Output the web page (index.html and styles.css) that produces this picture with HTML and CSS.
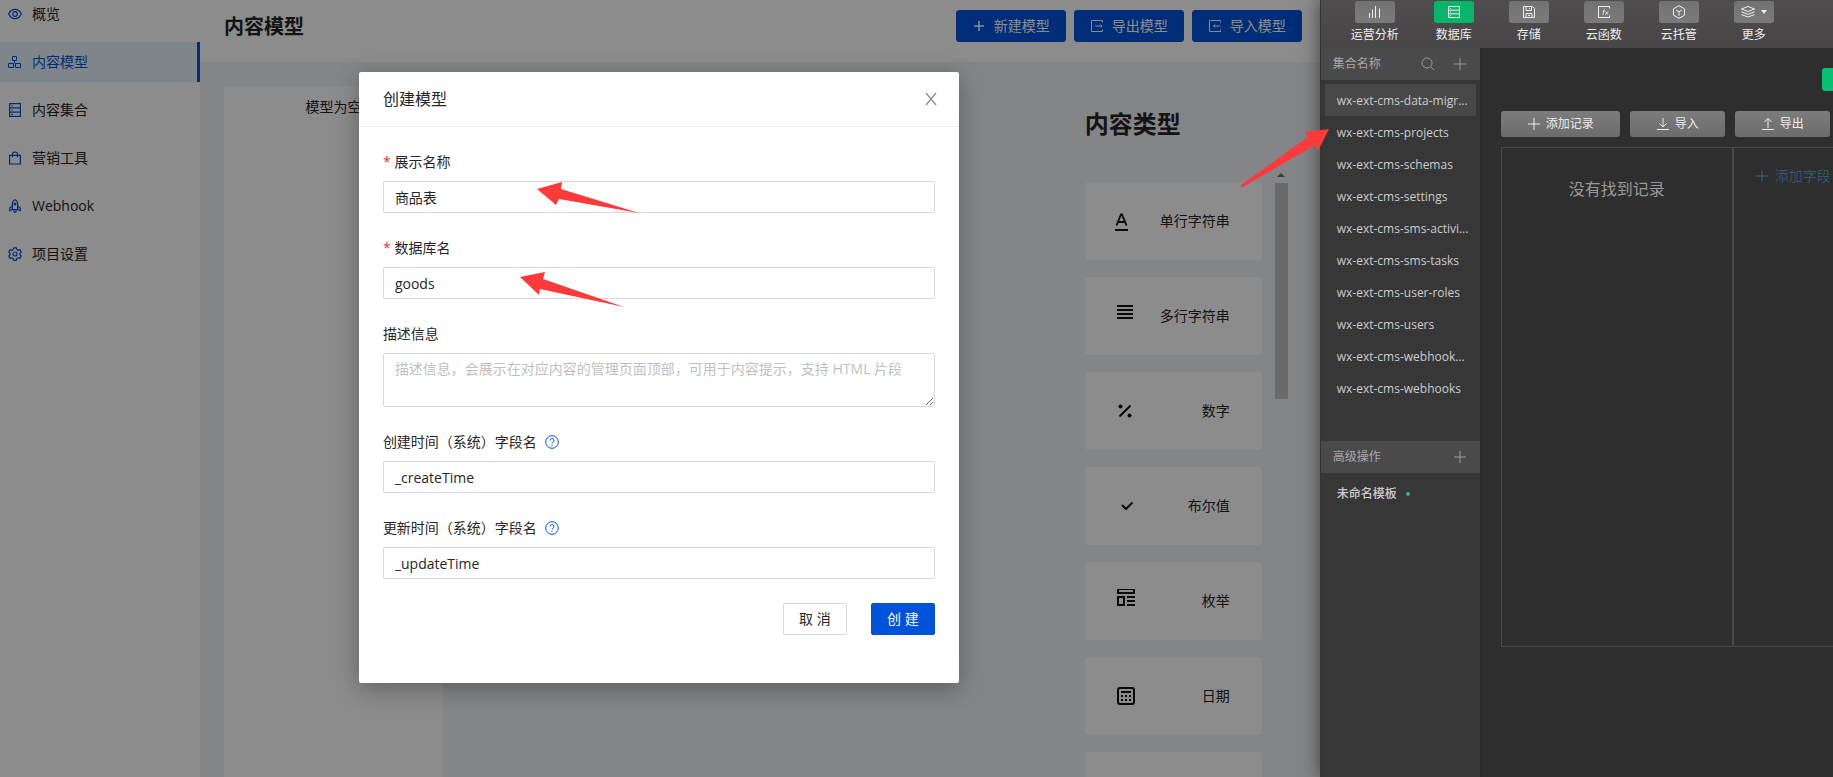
FILE: index.html
```html
<!DOCTYPE html>
<html lang="zh-CN">
<head>
<meta charset="utf-8">
<title>内容模型</title>
<link rel="stylesheet" href="styles.css">
</head>
<body>
<div class="desktop">
  <div class="cms">
    <nav class="menu">
      <a class="menu-item" href="#"><svg class="menu-icon" viewBox="0 0 14 14"><path d="M.6 7C2 4.200 4.300 2.400 7 2.400S12 4.200 13.400 7C12 9.800 9.700 11.600 7 11.600S2 9.800.6 7z"/><circle cx="7" cy="7" r="2.300"/></svg>概览</a>
      <a class="menu-item active" href="#"><svg class="menu-icon" viewBox="0 0 14 14"><path d="M4.500 1.500h4v4h-4zM.5 8.500h5v4h-5zM7.500 8.500h5v4h-5zM6.500 5.500v3" stroke-width="1"/></svg>内容模型</a>
      <a class="menu-item" href="#"><svg class="menu-icon" viewBox="0 0 14 14"><path d="M1.600.6h10.800v12.800H1.600zM1.600 4.800h10.800M1.600 9.200h10.800M3.400 2.800h1.500M3.400 7h1.500M3.400 11.300h1.500"/></svg>内容集合</a>
      <a class="menu-item" href="#"><svg class="menu-icon" viewBox="0 0 14 14"><path d="M1.600 4.300h10.800v8.700H1.600zM4.500 6.300V3.500a2.500 2.500 0 0 1 5 0v2.800"/></svg>营销工具</a>
      <a class="menu-item" href="#"><svg class="menu-icon" viewBox="0 0 14 14"><path d="M4.400 10.500V4.300C4.400 2.600 5.500 1.300 7 .7c1.500.6 2.600 1.900 2.600 3.600v6.200zM4.400 6.800 1.800 9v2.600l2.600-1.100M9.600 6.800 12.200 9v2.600l-2.600-1.100M5.700 10.700C5.700 12 6.200 13 7 13.400c.8-.4 1.300-1.400 1.300-2.700"/><circle cx="7" cy="5" r=".9"/></svg>Webhook</a>
      <a class="menu-item" href="#"><svg class="menu-icon" viewBox="0 0 14 14"><path d="M5.700.8h2.600l.5 1.800 1.300.7 1.800-.5 1.300 2.300L11.900 6.400v1.300l1.300 1.300-1.300 2.200-1.800-.4-1.300.7-.5 1.800H5.700l-.5-1.800-1.300-.7-1.800.4L.8 9l1.300-1.300V6.400L.8 5.100l1.300-2.300 1.800.5 1.300-.7z"/><circle cx="7" cy="7" r="2"/></svg>项目设置</a>
    </nav>
    <main class="page">
      <header class="page-header">
        <h1 class="page-title">内容模型</h1>
        <div class="page-actions">
          <button class="btn btn-primary btn-action"><svg class="btn-icon" viewBox="0 0 14 14"><path d="M7 2v10M2 7h10" stroke-width="1.500"/></svg>新建模型</button>
          <button class="btn btn-primary btn-action"><svg class="btn-icon" viewBox="0 0 14 14"><path d="M12.500 3.500v-2h-11v11h11v-2M5 7h7M10.500 5.500 12 7l-1.500 1.500"/></svg>导出模型</button>
          <button class="btn btn-primary btn-action"><svg class="btn-icon" viewBox="0 0 14 14"><path d="M12.500 3.500v-2h-11v11h11v-2M5.500 7h7M7 5.500 5.500 7 7 8.500"/></svg>导入模型</button>
        </div>
      </header>
      <div class="page-body">
        <section class="model-card">模型为空</section>
        <aside class="types">
          <h2 class="types-title">内容类型</h2>
          <div class="types-scroll">
            <ul class="type-list">
              <li class="type-card"><svg class="type-icon" viewBox="0 0 24 24"><path d="M3.500 16.500 8 5.500h1l4.500 11M5 13h7" stroke-width="1.800"/><path d="M2 20h13v2H2z" class="solid"/></svg>单行字符串</li>
              <li class="type-card"><svg class="type-icon" viewBox="0 0 24 24"><path d="M4 1h16v2H4zM4 5h16v2H4zM4 9h16v2H4zM4 13h16v2H4z" class="solid"/></svg>多行字符串</li>
              <li class="type-card"><svg class="type-icon" viewBox="0 0 24 24"><path d="m6.500 17.500 11-11" class="thick"/><circle cx="7.500" cy="7.500" r="2" class="solid"/><circle cx="16.500" cy="16.500" r="2" class="solid"/></svg>数字</li>
              <li class="type-card"><svg class="type-icon" viewBox="0 0 24 24"><path d="m9 11 4 4 6.500-6.500" class="thick"/></svg>布尔值</li>
              <li class="type-card"><svg class="type-icon" viewBox="0 0 24 24"><path d="M5 0h16v4H5zM5 8h6v8H5zM14 8h8M14 12h8M14 16h8" class="thick"/></svg>枚举</li>
              <li class="type-card"><svg class="type-icon" viewBox="0 0 24 24"><rect x="5" y="4" width="16" height="16" rx="2" class="thick"/><path d="M8 7h10v2H8zM8 11h2v2H8zM12 11h2v2h-2zM16 11h2v2h-2zM8 15h2v2H8zM12 15h2v2h-2zM16 15h2v2h-2z" class="solid"/></svg>日期</li>
              <li class="type-card"></li>
            </ul>
            <div class="scrollbar"><span class="scroll-up"></span><span class="scroll-thumb"></span></div>
          </div>
        </aside>
      </div>
    </main>
    <div class="mask">
      <section class="modal" role="dialog" aria-labelledby="modal-title">
        <header class="modal-header">
          <h2 class="modal-title" id="modal-title">创建模型</h2>
          <button class="modal-close" aria-label="关闭"><svg viewBox="0 0 16 16"><path d="m3 2 10 12M13 2 3 14" stroke-width="1.300"/></svg></button>
        </header>
        <form class="form">
          <div class="field"><label class="label required" for="f-name">展示名称</label><input class="input" id="f-name" value="商品表"></div>
          <div class="field"><label class="label required" for="f-db">数据库名</label><input class="input" id="f-db" value="goods"></div>
          <div class="field"><label class="label" for="f-desc">描述信息</label><textarea class="input area" id="f-desc" placeholder="描述信息，会展示在对应内容的管理页面顶部，可用于内容提示，支持 HTML 片段"></textarea></div>
          <div class="field"><label class="label" for="f-create">创建时间（系统）字段名<svg class="help" viewBox="0 0 14 14"><circle cx="7" cy="7" r="6.300"/><path d="M5 5.600a2 2 0 1 1 2.900 1.700c-.6.300-.9.600-.9 1.300M7 9.700v1.100"/></svg></label><input class="input" id="f-create" value="_createTime"></div>
          <div class="field"><label class="label" for="f-update">更新时间（系统）字段名<svg class="help" viewBox="0 0 14 14"><circle cx="7" cy="7" r="6.300"/><path d="M5 5.600a2 2 0 1 1 2.900 1.700c-.6.300-.9.600-.9 1.300M7 9.700v1.100"/></svg></label><input class="input" id="f-update" value="_updateTime"></div>
          <div class="form-actions">
            <button type="button" class="btn">取&nbsp;消</button>
            <button type="button" class="btn btn-primary">创&nbsp;建</button>
          </div>
        </form>
        <svg class="arrow arrow-name" viewBox="0 0 102 32"><path d="M0 7 25 0 24 7 102 31 22 17 19 23z"/></svg>
        <svg class="arrow arrow-db" viewBox="0 0 104 36"><path d="M0 5 25 0 23 7 104 35 20 17 19 23z"/></svg>
      </section>
    </div>
  </div>

  <div class="devtool">
    <div class="toolbar">
      <button class="tool"><span class="tool-icon"><svg viewBox="0 0 14 14"><path d="M1.500 8v5M4.500 4.500V13M7.500 1v12M11.500 3.500V13"/></svg></span>运营分析</button>
      <button class="tool on"><span class="tool-icon"><svg viewBox="0 0 14 14"><path d="M1.500 1.500h11v11h-11zM1.500 5.200h11M1.500 8.800h11M3 3.400h1M3 7h1M3 10.700h1"/></svg></span>数据库</button>
      <button class="tool"><span class="tool-icon"><svg viewBox="0 0 14 14"><path d="M1.500 1.500h9l2 2v9h-11zM4 1.500v4h5.500v-4M4 12.500v-4h6v4M7.500 3v1M6 10.500h2"/></svg></span>存储</button>
      <button class="tool"><span class="tool-icon"><svg viewBox="0 0 14 14"><path d="M12.500 3.500v-2h-11v11h11v-2"/><path d="M8 4.500C6.800 4.200 6.800 5 6.600 6.300L6 9.800M5.500 6.300h2.200M8.500 6.300l2.500 3.500M11.300 6.300 8.200 9.800" stroke-width=".8"/></svg></span>云函数</button>
      <button class="tool"><span class="tool-icon"><svg viewBox="0 0 14 14"><path d="m7 .7 5.500 3.100v6.400L7 13.300 1.500 10.200V3.800zM4 5l3 1.800L10 5M7 6.800v4"/></svg></span>云托管</button>
      <button class="tool"><span class="tool-icon"><svg viewBox="0 0 14 14"><path d="M7 1.500 13.500 4 7 6.500.5 4zM.5 6.800 7 9.300l6.500-2.500M.5 9.500 7 12l6.500-2.500"/></svg><i class="caret"></i></span>更多</button>
    </div>
    <div class="workspace">
      <aside class="side">
        <div class="side-head"><span>集合名称</span><button class="side-btn" aria-label="搜索"><svg viewBox="0 0 14 14"><circle cx="6" cy="6" r="5"/><path d="m9.700 9.700 3.500 3.500"/></svg></button><button class="side-btn" aria-label="添加集合"><svg viewBox="0 0 14 14"><path d="M7 1v12M1 7h12"/></svg></button></div>
        <ul class="collections">
          <li class="collection current">wx-ext-cms-data-migr...</li>
          <li class="collection">wx-ext-cms-projects</li>
          <li class="collection">wx-ext-cms-schemas</li>
          <li class="collection">wx-ext-cms-settings</li>
          <li class="collection">wx-ext-cms-sms-activi...</li>
          <li class="collection">wx-ext-cms-sms-tasks</li>
          <li class="collection">wx-ext-cms-user-roles</li>
          <li class="collection">wx-ext-cms-users</li>
          <li class="collection">wx-ext-cms-webhook...</li>
          <li class="collection">wx-ext-cms-webhooks</li>
        </ul>
        <div class="side-head"><span>高级操作</span><button class="side-btn" aria-label="添加操作"><svg viewBox="0 0 14 14"><path d="M7 1v12M1 7h12"/></svg></button></div>
        <ul class="collections">
          <li class="collection">未命名模板<i class="dot"></i></li>
        </ul>
      </aside>
      <section class="records">
        <div class="records-top"><span class="green-tab"></span></div>
        <div class="records-actions">
          <button class="gray-btn wide"><svg viewBox="0 0 14 14"><path d="M7 1v12M1 7h12"/></svg>添加记录</button>
          <button class="gray-btn"><svg viewBox="0 0 14 14"><path d="M7 1v9M3.500 6.500 7 10l3.500-3.500M1 12.500h12"/></svg>导入</button>
          <button class="gray-btn"><svg viewBox="0 0 14 14"><path d="M7 11V1.500M3.500 5 7 1.500 10.500 5M1 12.500h12"/></svg>导出</button>
        </div>
        <div class="records-table">
          <div class="empty">没有找到记录</div>
          <div class="fields"><button class="add-field"><svg viewBox="0 0 12 12"><path d="M6 0v12M0 6h12"/></svg>添加字段</button></div>
        </div>
      </section>
    </div>
    <svg class="arrow arrow-list" viewBox="0 0 88 58"><path d="M88 0 64 3 67 8 0 56 0 58 2 58 74 16 77 22z"/></svg>
  </div>
</div>
</body>
</html>
```
FILE: styles.css
```css
* { box-sizing: border-box; }
body {
  margin: 0;
  font: 14px/22px "Open Sans", "Noto Sans CJK SC", sans-serif;
  color: #262626;
}
button, input, textarea { font: inherit; color: inherit; margin: 0; }
button { border: 0; background: none; padding: 0; white-space: nowrap; }
ul { list-style: none; margin: 0; padding: 0; }
h1, h2 { margin: 0; }
svg { fill: none; stroke: currentColor; flex: none; }

.desktop { display: flex; height: 100vh; overflow: hidden; }

/* CMS window */
.cms { position: relative; flex: 1; min-width: 0; display: flex; overflow: hidden; background: #f0f2f5; }
.menu {
  flex: 0 0 200px;
  display: flex; flex-direction: column; gap: 8px;
  margin-top: -6px;
  background: #fff;
}
.menu-item {
  display: flex; align-items: center; gap: 10px;
  height: 40px; padding-left: 8px;
  color: #262626; text-decoration: none;
}
.menu-item.active { background: #e6f4ff; color: #0052d9; border-right: 3px solid #0052d9; }
.menu-icon { width: 14px; height: 14px; color: #0052d9; stroke-width: 1.2; }

.page { flex: 1; min-width: 0; display: flex; flex-direction: column; }
.page-header {
  display: flex; justify-content: space-between; align-items: flex-start;
  height: 62px; flex: none;
  padding: 10px 18px 0 24px;
  background: #fff;
}
.page-title { font-size: 20px; line-height: 34px; font-weight: 600; }
.page-actions { display: flex; gap: 8px; }
.btn {
  height: 32px; min-width: 64px; padding: 0 15px;
  border: 1px solid #d9d9d9; border-radius: 2px;
  background: #fff;
}
.btn-primary { background: #0052d9; border-color: #0052d9; color: #fff; }
.btn-action { display: flex; align-items: center; gap: 8px; border-radius: 3px; }
.btn-icon { width: 14px; height: 14px; }

.page-body { flex: 1; min-height: 0; display: flex; justify-content: space-between; padding: 24px 32px 0 24px; }
.model-card { width: 219px; padding-top: 10px; background: #fff; text-align: center; }
.types { width: 203px; padding-top: 20px; display: flex; flex-direction: column; }
.types-title { font-size: 24px; line-height: 36px; font-weight: 600; }
.types-scroll { display: flex; justify-content: space-between; margin-top: 30px; }
.type-list { width: 177px; padding-top: 10px; display: flex; flex-direction: column; gap: 17px; }
.type-card {
  display: flex; align-items: center; justify-content: space-between;
  height: 78px; flex: none; padding: 0 32px 0 28px;
  border-radius: 4px; background: #fff;
}
.type-icon { width: 24px; height: 24px; color: #111; }
.thick { stroke-width: 2; }
.solid { fill: currentColor; stroke: none; }
.scrollbar { width: 13px; display: flex; flex-direction: column; align-items: center; gap: 6px; padding-top: 1px; }
.scroll-up { border: 4px solid transparent; border-top: 0; border-bottom-color: #707070; }
.scroll-thumb { width: 13px; height: 216px; background: #c1c1c1; }

/* Dialog */
.mask {
  position: absolute; inset: 0;
  display: flex; justify-content: center; align-items: flex-start;
  padding: 72px 2px 0 0;
  background: rgba(0, 0, 0, .45);
}
.modal {
  position: relative; width: 600px;
  border-radius: 2px; background: #fff;
  box-shadow: 0 6px 24px rgba(0, 0, 0, .3);
}
.modal-header {
  display: flex; justify-content: space-between; align-items: center;
  height: 55px; padding: 0 20px 0 24px;
  border-bottom: 1px solid #f0f0f0;
}
.modal-title { font-size: 16px; font-weight: 400; }
.modal-close { width: 16px; height: 16px; color: #8c8c8c; display: flex; }
.form { display: flex; flex-direction: column; gap: 24px; padding: 24px 24px 48px; }
.field { display: flex; flex-direction: column; gap: 8px; }
.label { display: flex; align-items: center; gap: 8px; }
.required { gap: 4px; }
.required::before { content: "*"; color: #e0303f; }
.help { width: 14px; height: 14px; color: #0052d9; }
.input {
  width: 100%; height: 32px; padding: 4px 11px;
  border: 1px solid #d9d9d9; border-radius: 2px;
  background: #fff; outline: 0;
}
.area { display: block; height: 54px; resize: vertical; }
.input::placeholder { color: #bfbfbf; }
.form-actions { display: flex; justify-content: flex-end; gap: 24px; }

/* Red pointers over the windows */
.arrow { position: absolute; fill: #fe3a3a; stroke: none; }
.arrow-name { left: 178px; top: 110px; width: 102px; }
.arrow-db { left: 161px; top: 200px; width: 104px; }
.arrow-list { left: -80px; top: 129px; width: 88px; }

/* Cloud console window */
.devtool {
  position: relative; flex: 0 0 28%;
  display: flex; flex-direction: column;
  background: #2e2e2e; color: #ddd;
  font-size: 12px; line-height: 18px;
  border-left: 1px solid #333;
  box-shadow: 0 0 18px rgba(0, 0, 0, .55);
}
.toolbar {
  display: flex; gap: 35px; height: 48px; flex: none;
  padding: 1px 0 0 30px;
  background: linear-gradient(#4f4d4d, #474545);
}
.tool { display: flex; flex-direction: column; align-items: center; gap: 3px; color: #eee; height: 43px; }
.tool-icon {
  display: flex; align-items: center; justify-content: center; gap: 6px;
  width: 40px; height: 22px; border-radius: 3px;
  background: linear-gradient(#727272, #7b7b7b);
}
.on .tool-icon { background: #07b56a; }
.tool-icon svg { width: 14px; height: 14px; }
.caret { border: 3px solid transparent; border-top: 4px solid #eee; border-bottom: 0; }

.workspace { flex: 1; min-height: 0; display: flex; }
.side { flex: 0 0 160px; background: #373737; border-right: 1px solid #2a2a2a; }
.side-head {
  display: flex; align-items: center; gap: 18px;
  height: 32px; padding: 0 13px 0 12px;
  background: #4a4a4a; color: #a8a8a8;
}
.side-head span { flex: 1; }
.side-btn { width: 14px; height: 14px; display: flex; color: #999; }
.collections { padding: 4px; }
.collections:first-of-type { min-height: 361px; }
.collection {
  display: flex; align-items: center;
  height: 32px; padding: 2px 0 0 12px;
  border-radius: 2px; color: #ccc; font-weight: 500; white-space: nowrap;
}
.current { background: #484848; }
.dot { width: 4px; height: 4px; margin-left: 9px; border-radius: 50%; background: #2fb888; }

.records { flex: 1; min-width: 0; padding: 20px 0 0 20px; overflow: hidden; }
.records-top { display: flex; justify-content: flex-end; height: 43px; }
.green-tab { width: 11px; height: 23px; border-radius: 3px 0 0 3px; background: #07c172; }
.records-actions { display: flex; gap: 10px; }
.gray-btn {
  display: flex; align-items: center; justify-content: center; gap: 5px;
  width: 95px; height: 26px; border-radius: 3px;
  background: linear-gradient(#7c7c7c, #6c6c6c); color: #eee;
}
.wide { width: 119px; }
.gray-btn svg { width: 14px; height: 14px; }
.records-table { display: flex; height: 500px; margin-top: 10px; border: 1px solid #484848; border-right: 0; }
.empty { flex: 0 0 232px; padding-top: 30px; border-right: 2px solid #484848; text-align: center; font-size: 16px; line-height: 22px; color: #999; }
.fields { padding: 17px 0 0 22px; }
.add-field { display: flex; align-items: center; gap: 7px; color: #2e6784; font-size: 14px; line-height: 22px; font-weight: 300; }
.add-field svg { width: 12px; height: 12px; }
```
